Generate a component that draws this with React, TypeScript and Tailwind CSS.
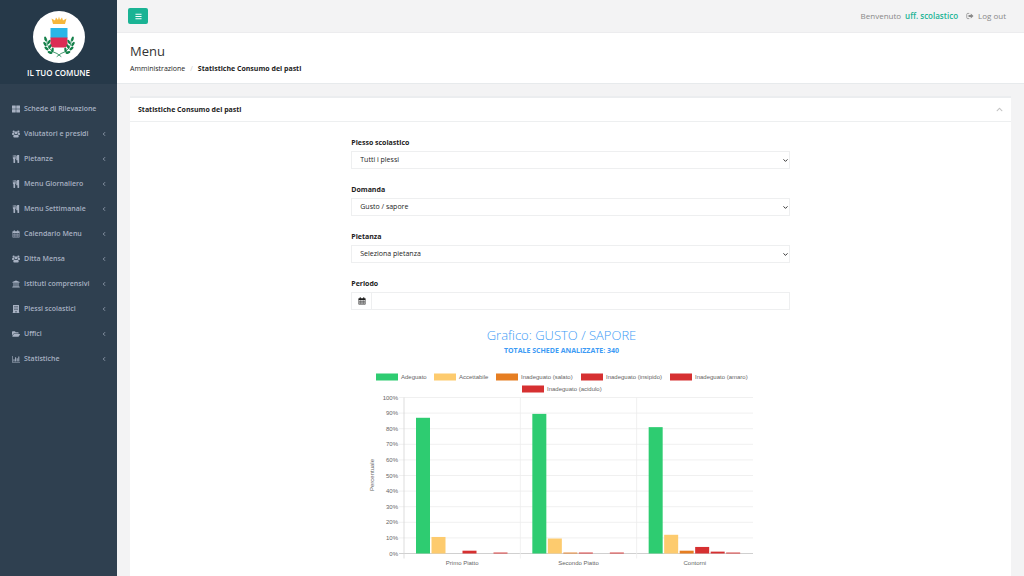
import { useState } from 'react';
import type { ReactElement } from 'react';
import { FaBars, FaBuilding, FaChevronUp, FaFolderOpen, FaThLarge, FaUniversity } from 'react-icons/fa';
import { ChevronDown, ChevronLeft } from 'lucide-react';

type IconProps = { size?: number; className?: string };
type NavItem = { label: string; icon: (p: IconProps) => ReactElement; sub: boolean };

// ── Icons ───────────────────────────────────────────────────────────────
function Cutlery({ size = 8, className }: IconProps) {
  return (
    <svg width={size} height={size} viewBox="128 0 1536 1792" fill="currentColor" className={className} aria-hidden="true">
      <path d="M832 64v640q0 61-35.500 111t-92.500 70v779q0 52-38 90t-90 38h-128q-52 0-90-38t-38-90v-779q-57-20-92.500-70t-35.500-111v-640q0-26 19-45t45-19 45 19 19 45v416q0 26 19 45t45 19 45-19 19-45v-416q0-26 19-45t45-19 45 19 19 45v416q0 26 19 45t45 19 45-19 19-45v-416q0-26 19-45t45-19 45 19 19 45zm768 0v1600q0 52-38 90t-90 38h-128q-52 0-90-38t-38-90v-512h-224q-13 0-22.500-9.500t-9.500-22.500v-800q0-132 94-226t226-94h256q26 0 45 19t19 45z" />
    </svg>
  );
}

function Group({ size = 8, className }: IconProps) {
  return (
    <svg width={size} height={size} viewBox="0 0 16 16" fill="currentColor" className={className} aria-hidden="true">
      <circle cx="3.300" cy="3.300" r="2.200" />
      <circle cx="12.700" cy="3.300" r="2.200" />
      <circle cx="8" cy="5.500" r="3.200" />
      <path d="M0 8.500Q0 5.500 1.500 5.500Q3 6.300 4 6Q4 8 5.200 9Q3.500 9 2.600 10H1.500Q0 10 0 8.500Z" />
      <path d="M16 8.500Q16 5.500 14.500 5.500Q13 6.300 12 6Q12 8 10.800 9Q12.500 9 13.400 10H14.500Q16 10 16 8.500Z" />
      <path d="M2.500 13.200Q2.500 9.300 5 9.300Q8 11 11 9.300Q13.500 9.300 13.500 13.200Q13.500 15.200 11.500 15.200H4.500Q2.500 15.200 2.500 13.200Z" />
    </svg>
  );
}

function Calendar({ size = 8, className }: IconProps) {
  return (
    <svg width={size} height={size} viewBox="0 0 16 16" className={className} aria-hidden="true">
      <path d="M1.500 5V14.500H14.500V5" fill="none" stroke="currentColor" strokeWidth="1.200" />
      <path d="M1 2.500H15V6H1Z M3.500 0.500H5.500V3H3.500Z M10.500 0.500H12.500V3H10.500Z" fill="currentColor" />
      <path d="M2 8.800H14M2 11.600H14M4.700 6V14M8 6V14M11.300 6V14" fill="none" stroke="currentColor" strokeWidth="0.900" />
    </svg>
  );
}

function BarChart({ size = 8, className }: IconProps) {
  return (
    <svg width={size} height={size} viewBox="0 0 16 16" fill="currentColor" className={className} aria-hidden="true">
      <path d="M0 2H1.200V13.800H16V15H0Z M3 8.500H5V12.800H3Z M6.200 4.500H8.200V12.800H6.200Z M9.400 6.500H11.400V12.800H9.400Z M12.600 3.200H14.600V12.800H12.600Z" />
    </svg>
  );
}

function SignOut({ size = 8, className }: IconProps) {
  return (
    <svg width={size} height={size} viewBox="0 0 16 16" className={className} aria-hidden="true">
      <path d="M6.500 2.800H3.500Q1.500 2.800 1.500 4.800V11.200Q1.500 13.200 3.500 13.200H6.500" fill="none" stroke="currentColor" strokeWidth="1.500" />
      <path d="M5 6H9.500V3L15 8L9.500 13V10H5Z" fill="currentColor" />
    </svg>
  );
}

const NAV: NavItem[] = [
  { label: 'Schede di Rilevazione', icon: FaThLarge,    sub: false },
  { label: 'Valutatori e presidi',  icon: Group,        sub: true },
  { label: 'Pietanze',              icon: Cutlery,      sub: true },
  { label: 'Menu Giornaliero',      icon: Cutlery,      sub: true },
  { label: 'Menu Settimanale',      icon: Cutlery,      sub: true },
  { label: 'Calendario Menu',       icon: Calendar,     sub: true },
  { label: 'Ditta Mensa',           icon: Group,        sub: true },
  { label: 'Istituti comprensivi',  icon: FaUniversity, sub: true },
  { label: 'Plessi scolastici',     icon: FaBuilding,   sub: true },
  { label: 'Uffici',                icon: FaFolderOpen, sub: true },
  { label: 'Statistiche',           icon: BarChart,     sub: true },
];

const FILTERS = [
  { id: 'plesso',   label: 'Plesso scolastico', value: 'Tutti i plessi' },
  { id: 'domanda',  label: 'Domanda',           value: 'Gusto / sapore' },
  { id: 'pietanza', label: 'Pietanza',          value: 'Seleziona pietanza' },
];

// x/y = position of the legend entry inside the chart
const SERIES = [
  { name: 'Adeguato',              color: '#2ecc71', x: 9,   y: 7 },
  { name: 'Accettabile',           color: '#fdcb6e', x: 67,  y: 7 },
  { name: 'Inadeguato (salato)',   color: '#e67e22', x: 129, y: 7 },
  { name: 'Inadeguato (insipido)', color: '#d63031', x: 214, y: 7 },
  { name: 'Inadeguato (amaro)',    color: '#d63031', x: 303, y: 7 },
  { name: 'Inadeguato (acidulo)',  color: '#d63031', x: 155, y: 19 },
];

const GROUPS = [
  { name: 'Primo Piatto',   values: [87, 10.6, 0, 1.8, 0, 0.6] },
  { name: 'Secondo Piatto', values: [89.5, 9.6, 0.6, 0.6, 0, 0.6] },
  { name: 'Contorni',       values: [81, 12, 1.8, 4.2, 1.2, 0.6] },
];

const LEFT = 37;
const TOP = 27.5;
const PLOT_W = 349;
const PLOT_H = 156;
const GROUP_W = PLOT_W / GROUPS.length;

function Chart() {
  const bottom = TOP + PLOT_H;
  return (
    <svg width="390" height="200" viewBox="0 0 390 200" role="img" aria-label="Grafico gusto e sapore"
      fontFamily="'Liberation Sans', Arial, sans-serif" fontSize="6" fill="#666">
      {SERIES.map(s => (
        <g key={s.name}>
          <rect x={s.x} y={s.y - 3.5} width="22" height="7" fill={s.color} />
          <text x={s.x + 25} y={s.y + 2}>{s.name}</text>
        </g>
      ))}

      {/* Horizontal grid + percentages */}
      {Array.from({ length: 11 }, (_, i) => {
        const y = bottom - (i * PLOT_H) / 10;
        return (
          <g key={i}>
            <line x1={LEFT - 5} x2={LEFT + PLOT_W} y1={y} y2={y} stroke={i === 0 ? '#c4c4c4' : '#ececec'} strokeWidth="0.8" />
            <text x={LEFT - 6} y={y + 2} textAnchor="end">{i * 10}%</text>
          </g>
        );
      })}
      {[0, 1, 2].map(i => (
        <line key={i} x1={LEFT + i * GROUP_W} x2={LEFT + i * GROUP_W} y1={TOP} y2={bottom + 5}
          stroke={i === 0 ? '#d4d4d4' : '#ececec'} strokeWidth="0.8" />
      ))}

      {/* Bars */}
      {GROUPS.map((g, gi) => (
        <g key={g.name}>
          {g.values.map((v, i) => (
            <rect key={i} x={LEFT + gi * GROUP_W + 12 + i * 15.5} y={bottom - (v * PLOT_H) / 100}
              width="14" height={(v * PLOT_H) / 100} fill={SERIES[i].color} />
          ))}
          <text x={LEFT + (gi + 0.5) * GROUP_W} y={bottom + 11} textAnchor="middle">{g.name}</text>
        </g>
      ))}
      <text transform="rotate(-90 7 105)" x="7" y="105" textAnchor="middle">Percentuale</text>
    </svg>
  );
}

function Crest() {
  return (
    <svg width="52" height="52" viewBox="0 0 52 52" aria-hidden="true">
      <circle cx="26" cy="26" r="26" fill="#fff" />
      <path d="M20 13 L18.500 7.500 L22 9.500 L23 6.500 L25 9 L26 5.500 L27 9 L29 6.500 L30 9.500 L33.500 7.500 L32 13 Z" fill="#f6b73c" />
      <path d="M17.500 17 H34.500 V27 H17.500 Z" fill="#29b6e8" />
      <path d="M17.500 26.500 H34.500 V33 Q34.500 36.500 31 36.500 H21 Q17.500 36.500 17.500 33 Z" fill="#dc2c55" />
      <g fill="none" stroke="#14804a" strokeWidth="0.8" strokeLinecap="round">
        <path d="M13.500 28 Q14 40 24 42.500 L28 45.500" />
        <path d="M38.500 28 Q38 40 28 42.500 L24 45.500" />
      </g>
      <g fill="#14804a">
        {[
          [12.5, 28, 75], [16, 31, 120], [12, 33, 55], [17, 35.5, 115],
          [13.5, 37.5, 40], [19.5, 39, 100], [17, 41.5, 15],
        ].map(([x, y, a]) => (
          <g key={`${x}-${y}`}>
            <ellipse cx={x} cy={y} rx="2.5" ry="1.2" transform={`rotate(${a} ${x} ${y})`} />
            <ellipse cx={52 - x} cy={y} rx="2.5" ry="1.2" transform={`rotate(${-a} ${52 - x} ${y})`} />
          </g>
        ))}
      </g>
    </svg>
  );
}

export default function App() {
  const [open, setOpen] = useState(true);
  const [periodo, setPeriodo] = useState('');

  return (
    <div className="flex min-h-screen bg-[#f3f3f4] font-['Open_Sans',sans-serif] text-[7px] leading-[10px] text-[#1c1c1c]">

      {/* Sidebar */}
      <aside className="w-[117px] shrink-0 bg-[#2f4050]">
        <div className="flex h-[84px] flex-col items-center bg-[#263949] pt-[11px]">
          <Crest />
          <p className="mt-[5px] text-[8px] font-semibold text-white">IL TUO COMUNE</p>
        </div>
        <nav className="pt-3">
          {NAV.map(({ label, icon: Icon, sub }) => (
            <a key={label} href="#" className="flex h-[25px] items-center gap-1 pr-2.5 pl-3 font-semibold text-[#a7b1c2]">
              <Icon size={8} className="shrink-0" />
              <span className="flex-1 whitespace-nowrap">{label}</span>
              {sub && <ChevronLeft size={6} strokeWidth={3} />}
            </a>
          ))}
        </nav>
      </aside>

      <div className="flex min-w-0 flex-1 flex-col">
        {/* Top bar */}
        <header className="flex h-[33px] items-center justify-between border-b border-[#ececee] pr-[18px] pl-[11px]">
          <button type="button" aria-label="Menu" className="flex h-4 w-5 items-center justify-center rounded-xs bg-[#1ab394] text-white">
            <FaBars size={7} />
          </button>
          <div className="flex items-center text-[8px] text-[#888]">
            <span>Benvenuto</span>
            <a href="#" className="ml-1 font-semibold text-[#1ab394]">uff. scolastico</a>
            <a href="#" className="ml-2 flex items-center gap-1">
              <SignOut size={8} /> Log out
            </a>
          </div>
        </header>

        {/* Page heading */}
        <div className="h-[51px] border-b border-[#e7eaec] bg-white px-[13px] pt-2">
          <h1 className="text-[13px] leading-5 font-normal text-[#333]">Menu</h1>
          <ol className="mt-[3px] flex">
            <li><a href="#">Amministrazione</a></li>
            <li className="px-[5px] text-[#ccc]">/</li>
            <li className="font-bold">Statistiche Consumo dei pasti</li>
          </ol>
        </div>

        <main className="flex flex-1 flex-col px-[13px] pt-3">
          <section className="flex-1 border-t-2 border-[#ebedef] bg-white">
            <div className="flex h-6 items-center justify-between border-b border-[#edeff0] px-2">
              <h2 className="font-bold">Statistiche Consumo dei pasti</h2>
              <button type="button" aria-label="Comprimi" onClick={() => setOpen(!open)} className="text-[#c4c4c4]">
                <FaChevronUp size={7} />
              </button>
            </div>

            {open && (
              <div className="flex flex-col items-center pt-4">
                <form className="flex w-1/2 flex-col gap-4 px-px">
                  {FILTERS.map(f => (
                    <div key={f.id}>
                      <label htmlFor={f.id} className="block font-bold">{f.label}</label>
                      <div className="relative mt-[3px]">
                        <select id={f.id} className="block h-[18px] w-full appearance-none border border-[#eeeff0] bg-white px-2">
                          <option>{f.value}</option>
                        </select>
                        <ChevronDown size={7} strokeWidth={3} className="pointer-events-none absolute top-1.5 right-px" />
                      </div>
                    </div>
                  ))}
                  <div>
                    <label htmlFor="periodo" className="block font-bold">Periodo</label>
                    <div className="mt-[3px] flex h-[18px] border border-[#eeeff0]">
                      <span className="flex w-5 items-center justify-center border-r border-[#eeeff0]">
                        <Calendar size={8} />
                      </span>
                      <input id="periodo" value={periodo} onChange={e => setPeriodo(e.target.value)}
                        className="min-w-0 flex-1 px-2 focus:outline-none" />
                    </div>
                  </div>
                </form>

                {/* Chart */}
                <div className="mt-[15px] flex flex-col items-center pr-[18px] text-[#3d9bf5]">
                  <h3 className="text-[13px] leading-5 font-light">Grafico: GUSTO / SAPORE</h3>
                  <p className="mt-px font-bold">TOTALE SCHEDE ANALIZZATE: 340</p>
                  <div className="mt-[14px]">
                    <Chart />
                  </div>
                </div>
              </div>
            )}
          </section>
        </main>
      </div>
    </div>
  );
}
